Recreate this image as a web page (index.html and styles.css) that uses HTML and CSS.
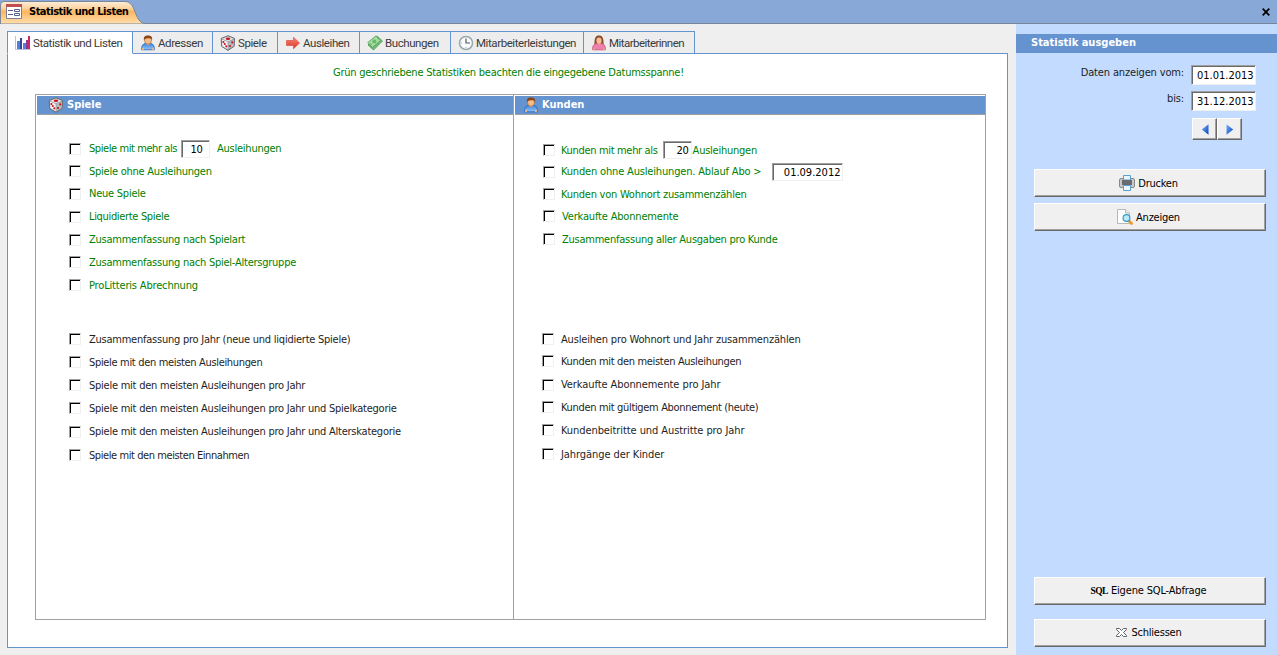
FILE: index.html
```
<!DOCTYPE html>
<html lang="de">
<head>
<meta charset="utf-8">
<title>Statistik und Listen</title>
<link rel="stylesheet" href="styles.css">
</head>
<body>
<svg width="0" height="0" class="defs" aria-hidden="true">
  <defs>
    <linearGradient id="doc" x1="0" y1="0" x2="0" y2="1"><stop offset="0" stop-color="#fdeedb"/><stop offset=".3" stop-color="#fdd3a0"/><stop offset=".45" stop-color="#fdb65e"/><stop offset="1" stop-color="#fee0b0"/></linearGradient>
    <linearGradient id="shirt" x1="0" y1="0" x2="0" y2="1"><stop offset="0" stop-color="#3b86dc"/><stop offset="1" stop-color="#8fc4ff"/></linearGradient>
    <linearGradient id="arrow" x1="0" y1="0" x2="0" y2="1"><stop offset="0" stop-color="#fb8d7c"/><stop offset="1" stop-color="#d92f22"/></linearGradient>
    <linearGradient id="tri" x1="0" y1="0" x2="1" y2="1"><stop offset="0" stop-color="#72b4fa"/><stop offset="1" stop-color="#0a3fc0"/></linearGradient>
    <symbol id="dice" viewBox="0 0 16 16">
      <path d="M8 .7 14.6 3.4 14.2 11.3 8 15.4 1.6 11.3 1.2 3.4Z" fill="#8d9499" stroke="#697176"/>
      <path d="M8 1.4 13.8 3.7 8 6.4 2 3.7Z" fill="#dfe2e4"/>
      <path d="M2 4.6 7.6 7V14.2L2.3 10.9Z" fill="#f8f8f8"/>
      <path d="M8.4 7 14 4.6 13.7 10.9 8.4 14.2Z" fill="#b4babd"/>
      <g fill="#c8141e"><ellipse cx="8" cy="3.8" rx="2.2" ry="1.3"/><circle cx="3.4" cy="7" r="1.1"/><circle cx="4.8" cy="9" r="1.1"/><circle cx="6.3" cy="11.3" r="1.1"/><circle cx="12.3" cy="7.4" r="1.1"/><circle cx="10" cy="11" r="1.1"/></g>
    </symbol>
    <symbol id="man" viewBox="0 0 16 16">
      <path d="M1.7 14.8C1.2 11 3 8.6 5.5 8.4H10.5C13 8.6 14.8 11 14.3 14.8Z" fill="url(#shirt)" stroke="#2463b5" stroke-width=".8"/>
      <path d="M2 14.8V12.8H4V15ZM12 15V12.8H14V14.8Z" fill="#f0b483"/>
      <path d="M5.6 8.2 8 10.6 10.4 8.2Z" fill="#e2a06b"/>
      <ellipse cx="8" cy="5.2" rx="3.5" ry="4" fill="#f5bd8b" stroke="#a4612d" stroke-width=".6"/>
      <path d="M4 5.4C3.2 2 5 .6 8 .6S12.8 2 12 5.4C11.7 4 11 3.3 9.7 3.2 7 3.4 5 3 4 5.4Z" fill="#8a4516"/>
    </symbol>
    <symbol id="woman" viewBox="0 0 16 16">
      <path d="M3.4 9.6C3.4 3 4.6 .6 8 .6S12.6 3 12.6 9.6Z" fill="#8c4b29"/>
      <path d="M1.7 14.8C1.2 11 3 8.8 5.5 8.6H10.5C13 8.8 14.8 11 14.3 14.8Z" fill="#ee7fae" stroke="#c54a79" stroke-width=".8"/>
      <path d="M2 14.8V12.8H4V15ZM12 15V12.8H14V14.8Z" fill="#e39a86"/>
      <path d="M6 8 8 10.4 10 8Z" fill="#e2a06b"/>
      <ellipse cx="8" cy="5.6" rx="2.6" ry="3.2" fill="#f5bd98"/>
    </symbol>
  </defs>
</svg>

<header class="titlebar">
  <div class="doc-tab">
    <svg class="doc-shape" width="145" height="24" viewBox="0 0 145 24"><path d="M.5 24V5Q.5 1.500 4 1.500H125C134 1.500 134 13 139 20Q141 23.500 145 23.500V24Z" fill="url(#doc)" stroke="#7d8797"/></svg>
    <svg class="doc-icon" width="16" height="15" viewBox="0 0 16 15"><path d="M.5.5H15.500V14.500H.5Z" fill="#fff" stroke="#7b7f9b"/><path d="M0 0H16V3H0Z" fill="#c0504d"/><path d="M2 6.500H7M2 10.500H7" stroke="#56618c"/><path d="M8.500 5.500H13.500V7.500H8.500ZM8.500 9.500H13.500V11.500H8.500Z" fill="#fff" stroke="#56618c"/></svg>
    <span class="doc-title">Statistik und Listen</span>
  </div>
  <svg class="close" width="8" height="8" viewBox="0 0 8 8"><path d="M.7.7 7.300 7.300M7.300.7.7 7.300" stroke="#000" stroke-width="1.700"/></svg>
</header>

<div class="workspace">
  <main class="main">
    <nav class="tabs">
      <div class="tab active t-stat"><svg width="16" height="16" viewBox="0 0 16 16"><path d="M.5 1V14.500H16" stroke="#b9c3df" fill="none"/><path d="M2 6H5V14H2Z" fill="#4d7fdc"/><path d="M5 3H7V14H5Z" fill="#37459b"/><path d="M8 8H11V14H8Z" fill="#5d7be0"/><path d="M11 5H13V14H11Z" fill="#8a3c94"/><path d="M13 1H15V14H13Z" fill="#cc2861"/></svg><span>Statistik und Listen</span></div>
      <div class="tab t-adr"><svg width="16" height="16"><use href="#man"/></svg><span>Adressen</span></div>
      <div class="tab t-spi"><svg width="16" height="16"><use href="#dice"/></svg><span>Spiele</span></div>
      <div class="tab t-aus"><svg width="16" height="16" viewBox="0 0 16 16"><path d="M1.500 5.500H8.500V2.300L14.500 8 8.500 13.700V10.500H1.500Z" fill="url(#arrow)" stroke="#dc5a49" stroke-width=".8"/></svg><span>Ausleihen</span></div>
      <div class="tab t-buc"><svg width="16" height="16" viewBox="0 0 16 16"><path d="M1 10 10 1 15.500 6 6.500 15Z" fill="#6fbd72" stroke="#4c9a55" stroke-width=".8"/><path d="M.8 7.500 9 .8 13.800 5.300 5.500 12.500Z" fill="#a5dca0" stroke="#4c9a55" stroke-width=".8"/><circle cx="7.300" cy="6.600" r="2" fill="#6cb96c"/><path d="M3 8 5 10M10 2.800 12 4.800" stroke="#6cb96c"/></svg><span>Buchungen</span></div>
      <div class="tab t-lei"><svg width="16" height="16" viewBox="0 0 16 16"><circle cx="8" cy="8" r="6.500" fill="#fafcfc" stroke="#9aa7aa" stroke-width="1.500"/><path d="M8 3.500V8H12" stroke="#4d5d66" fill="none" stroke-width="1.200"/><path d="M8 13V12M3 8H4" stroke="#9aa7aa"/></svg><span>Mitarbeiterleistungen</span></div>
      <div class="tab t-inn"><svg width="16" height="16"><use href="#woman"/></svg><span>Mitarbeiterinnen</span></div>
    </nav>
    <section class="panel">
      <p class="hint">Grün geschriebene Statistiken beachten die eingegebene Datumsspanne!</p>
      <div class="columns">
        <section class="column games">
          <h2><svg width="16" height="16"><use href="#dice"/></svg><span>Spiele</span></h2>
          <div class="list green g1">
            <div class="row"><i class="box"></i><label class="up dense">Spiele mit mehr als</label><span class="field count">10</span><label class="up after">Ausleihungen</label></div>
            <div class="row"><i class="box"></i><label>Spiele ohne Ausleihungen</label></div>
            <div class="row"><i class="box"></i><label class="up">Neue Spiele</label></div>
            <div class="row"><i class="box"></i><label class="up snug">Liquidierte Spiele</label></div>
            <div class="row"><i class="box"></i><label class="up">Zusammenfassung nach Spielart</label></div>
            <div class="row"><i class="box"></i><label>Zusammenfassung nach Spiel-Altersgruppe</label></div>
            <div class="row"><i class="box"></i><label class="open">ProLitteris Abrechnung</label></div>
          </div>
          <div class="list g2">
            <div class="row"><i class="box"></i><label>Zusammenfassung pro Jahr (neue und liqidierte Spiele)</label></div>
            <div class="row"><i class="box"></i><label class="snug">Spiele mit den meisten Ausleihungen</label></div>
            <div class="row"><i class="box"></i><label>Spiele mit den meisten Ausleihungen pro Jahr</label></div>
            <div class="row"><i class="box"></i><label>Spiele mit den meisten Ausleihungen pro Jahr und Spielkategorie</label></div>
            <div class="row"><i class="box"></i><label class="up">Spiele mit den meisten Ausleihungen pro Jahr und Alterskategorie</label></div>
            <div class="row"><i class="box"></i><label class="dense">Spiele mit den meisten Einnahmen</label></div>
          </div>
        </section>
        <section class="column clients">
          <h2><svg width="16" height="16"><use href="#man"/></svg><span>Kunden</span></h2>
          <div class="list green k1">
            <div class="row"><i class="box"></i><label class="snug">Kunden mit mehr als</label><span class="field count right">20</span><label class="near">Ausleihungen</label></div>
            <div class="row"><i class="box"></i><label class="up open">Kunden ohne Ausleihungen. Ablauf Abo &gt;</label><span class="field date">01.09.2012</span></div>
            <div class="row"><i class="box"></i><label>Kunden von Wohnort zusammenzählen</label></div>
            <div class="row"><i class="box"></i><label class="in open">Verkaufte Abonnemente</label></div>
            <div class="row"><i class="box"></i><label class="in">Zusammenfassung aller Ausgaben pro Kunde</label></div>
          </div>
          <div class="list k2">
            <div class="row"><i class="box"></i><label class="open">Ausleihen pro Wohnort und Jahr zusammenzählen</label></div>
            <div class="row"><i class="box"></i><label class="snug">Kunden mit den meisten Ausleihungen</label></div>
            <div class="row"><i class="box"></i><label class="up loose">Verkaufte Abonnemente pro Jahr</label></div>
            <div class="row"><i class="box"></i><label class="snug">Kunden mit gültigem Abonnement (heute)</label></div>
            <div class="row"><i class="box"></i><label class="loose">Kundenbeitritte und Austritte pro Jahr</label></div>
            <div class="row"><i class="box"></i><label class="loose">Jahrgänge der Kinder</label></div>
          </div>
        </section>
      </div>
    </section>
  </main>

  <aside class="side">
    <h2>Statistik ausgeben</h2>
    <div class="dates">
      <label>Daten anzeigen vom:</label><span class="field">01.01.2013</span>
      <label>bis:</label><span class="field">31.12.2013</span>
    </div>
    <div class="steps">
      <button class="btn"><svg width="8" height="11" viewBox="0 0 8 11"><path d="M7.500.3V10.700L.8 5.500Z" fill="url(#tri)"/></svg></button>
      <button class="btn"><svg width="8" height="11" viewBox="0 0 8 11"><path d="M.5.3V10.700L7.200 5.500Z" fill="url(#tri)"/></svg></button>
    </div>
    <div class="actions">
      <button class="btn wide"><svg width="16" height="16" viewBox="0 0 16 16"><path d="M2 3.500H14Q15.500 3.500 15.500 5V11Q15.500 12.500 14 12.500H2Q.5 12.500.5 11V5Q.5 3.500 2 3.500Z" fill="#c6c8ca" stroke="#85898c"/><path d="M4.500 5V.5H11.500V5Z" fill="#e8f6ff" stroke="#5aa0cb"/><path d="M3 5H13V10H3Z" fill="#686c70"/><path d="M4.500 10.500H11.500V15.500H4.500Z" fill="#eaf7ff" stroke="#5aa0cb"/></svg><span>Drucken</span></button>
      <button class="btn wide"><svg width="16" height="16" viewBox="0 0 16 16"><path d="M.5.5H8.500L12.500 4V14.500H.5Z" fill="#fff" stroke="#b5b8bb"/><path d="M8.500.5V4H12.500" fill="#eee" stroke="#b5b8bb"/><path d="M12 12 14.500 14.500" stroke="#ee9820" stroke-width="2.800" stroke-linecap="round"/><circle cx="9.500" cy="9" r="3.400" fill="#bdeafa" stroke="#3b9cc0" stroke-width="1.200"/></svg><span>Anzeigen</span></button>
    </div>
    <div class="actions bottom">
      <button class="btn wide"><b class="sql">SQL</b><span class="open">Eigene SQL-Abfrage</span></button>
      <button class="btn wide"><svg class="x" width="11" height="9" viewBox="0 0 11 9"><path d="M.5.5H3.500L5.500 2.500 7.500.5H10.500V1.500L7.500 4.500 10.500 7.500V8.500H7.500L5.500 6.500 3.500 8.500H.5V7.500L3.500 4.500.5 1.500Z" fill="#fff" stroke="#4b525c" stroke-width=".9"/></svg><span>Schliessen</span></button>
    </div>
  </aside>
</div>
</body>
</html>
```
FILE: styles.css
```
* { box-sizing: border-box; }
body {
  margin: 0; width: 1277px; height: 655px; overflow: hidden;
  display: flex; flex-direction: column;
  background: #efefef; color: #1e1e1e;
  font: 11px/14px Tahoma, "DejaVu Sans Condensed", sans-serif;
  letter-spacing: -0.24px;
}
svg { display: block; flex: none; }
label, span { white-space: nowrap; }
.defs { position: absolute; }
h2 { margin: 0; color: #fff; font: bold 11px/14px Tahoma, "DejaVu Sans Condensed", sans-serif; letter-spacing: 0; }

/* letter fitting */
.dense { letter-spacing: -0.42px; }
.snug { letter-spacing: -0.33px; }
.open { letter-spacing: -0.17px; }
.loose { letter-spacing: -0.08px; }

.titlebar {
  height: 24px; flex: none; display: flex; align-items: center; justify-content: space-between;
  padding-right: 7px; background: #88a9d7; border-bottom: 1px solid #74859c;
}
.doc-tab { position: relative; width: 145px; height: 24px; display: flex; align-items: center; gap: 7px; padding-left: 6px; }
.doc-shape { position: absolute; left: 0; top: 0; }
.doc-icon, .doc-title { position: relative; }
.doc-title { color: #000; font-weight: bold; letter-spacing: -0.5px; padding-top: 1px; }

.workspace { flex: 1; display: flex; min-height: 0; }
.main { width: 1016px; padding: 7px 8px 7px 7px; display: flex; flex-direction: column; }
.tabs { display: flex; height: 23px; flex: none; margin-bottom: -1px; }
.tab {
  height: 23px; border: 1px solid #6593cf; border-left-width: 0; background: #ededed;
  display: flex; align-items: center; gap: 2px; padding-left: 7px; color: #3a3a3a;
  font: 11.5px/14px Roboto, sans-serif; letter-spacing: -0.42px;
}
.tab span { padding-top: 1px; }
.tab.active { background: #fff; border-left-width: 1px; border-bottom-color: #fff; z-index: 1; }
.t-stat { width: 126px; }
.t-adr { width: 80px; }
.t-spi { width: 65px; }
.t-aus { width: 82px; }
.t-buc { width: 91px; }
.t-lei { width: 133px; }
.t-inn { width: 111px; letter-spacing: -0.55px; }

.panel { flex: 1; background: #fff; border: 1px solid #6593cf; padding: 12px 21px 27px 27px; display: flex; flex-direction: column; }
.hint { margin: 0 0 14px; padding-left: 298px; color: #008000; }
.columns { flex: 1; display: flex; border: 1px solid #a0a0a0; }
.column { padding: 1px 0 0 1px; }
.games { width: 478px; border-right: 1px solid #a0a0a0; }
.clients { flex: 1; }
.column h2 { height: 19px; display: flex; align-items: center; gap: 3px; background: #6593cf; border-bottom: 1px solid #a0a0a0; padding-left: 11px; }
.clients h2 { padding-left: 8px; }
.list { display: grid; padding-left: 32px; }
.green { color: #008000; }
.clients .list { padding-left: 28px; }
.clients .k2 { padding-left: 27px; }
.g1 { margin-top: 23px; grid-template-rows: 22px 23px 23px 23px 22px 23px 22px; }
.g2 { margin-top: 32px; grid-template-rows: 23px 23px 23px 24px 23px 22px; }
.k1 { margin-top: 24px; grid-template-rows: 22px 22px 22px 23px 22px; }
.k2 { margin-top: 78px; grid-template-rows: 22px 24px 22px 23px 24px 22px; }
.row { height: 22px; display: flex; align-items: center; }
.row label { margin-left: 8px; padding-top: 2px; }
.clients .row label { margin-left: 6px; }
.clients .k2 .row label { margin-left: 7px; }
.clients .row label.in { margin-left: 7px; }
.row .up { padding-top: 0; }
.box { width: 12px; height: 12px; flex: none; background: #fff; border: 1px solid; border-color: #a0a0a0 #f0f0f0 #f0f0f0 #a0a0a0; box-shadow: inset 1px 1px #000; }
.field {
  height: 18px; background: #fff; color: #000; border: 1px solid; border-color: #a0a0a0 #f0f0f0 #f0f0f0 #a0a0a0;
  box-shadow: inset 1px 1px #696969; line-height: 18px; letter-spacing: 0;
}
.row .count { width: 29px; text-align: center; margin-left: 4px; padding-left: 2px; letter-spacing: -0.3px; }
.row .count.right { margin-left: 5px; text-align: right; padding-right: 2px; }
.row .date { width: 71px; text-align: right; padding-right: 1px; margin-left: 10px; }
.row label.after { margin-left: 7px; }
.clients .row label.near { margin-left: 1px; }

.side { flex: 1; background: #c2dbff; padding: 10px 0 7px; display: flex; flex-direction: column; }
.side h2 { height: 19px; background: #6593cf; padding: 2px 0 0 15px; }
.dates { display: grid; grid-template-columns: 168px 65px; column-gap: 7px; row-gap: 6px; margin-top: 12px; }
.dates label { text-align: right; padding-top: 1px; letter-spacing: -0.15px; }
.dates .field { height: 20px; line-height: 19px; padding-left: 5px; }
.steps { display: flex; margin: 7px 0 0 176px; }
.btn { width: 25px; height: 22px; padding: 0; display: flex; align-items: center; justify-content: center; background: #f0f0f0; color: #000; font: inherit; letter-spacing: inherit; border: 1px solid; border-color: #fff #696969 #696969 #fff; box-shadow: inset -1px -1px #a0a0a0; }
.actions { display: flex; flex-direction: column; gap: 6px; margin: 29px 10px 0 18px; }
.actions.bottom { margin-top: auto; gap: 14px; }
.wide { width: 232px; height: 28px; gap: 3px; padding-right: 3px; }
.wide span { padding-top: 1px; }
.bottom .btn { height: 28px; padding-bottom: 1px; }
.side .bottom { padding-bottom: 1px; }
.sql { font: bold 9.5px/12px "Liberation Serif", serif; letter-spacing: -0.5px; }
.x { margin-right: 2px; }
```
